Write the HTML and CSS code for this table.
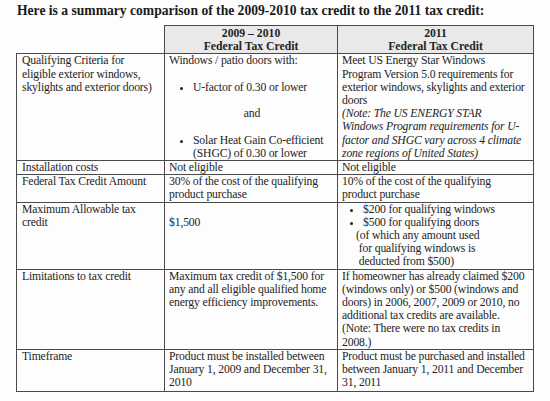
FILE: index.html
```html
<html>
<head>
<meta charset="utf-8">
<title>Tax credit comparison</title>
<link rel="stylesheet" href="styles.css">
</head>
<body>

<div class="page">
<p class="intro">Here is a summary comparison of the 2009-2010 tax credit to the 2011 tax credit:</p>

<table class="compare">
    <tr class="head">
        <th class="blank"></th>
        <th>2009 &ndash; 2010<br>Federal Tax Credit</th>
        <th>2011<br>Federal Tax Credit</th>
    </tr>
    <tr>
        <td>Qualifying Criteria for<br>eligible exterior windows,<br>skylights and exterior doors)</td>
        <td>
            Windows / patio doors with:
            <ul class="dots">
                <li>U-factor of 0.30 or lower</li>
            </ul>
            <div class="and">and</div>
            <ul class="dots">
                <li>Solar Heat Gain Co-efficient<br>(SHGC) of 0.30 or lower</li>
            </ul>
        </td>
        <td>
            Meet US Energy Star Windows<br>Program Version 5.0 requirements for<br>exterior windows, skylights and exterior<br>doors
            <div class="note">(Note: The US ENERGY STAR<br>Windows Program requirements for U-<br>factor and SHGC vary across 4 climate<br>zone regions of United States)</div>
        </td>
    </tr>
    <tr>
        <td>Installation costs</td>
        <td>Not eligible</td>
        <td>Not eligible</td>
    </tr>
    <tr>
        <td>Federal Tax Credit Amount</td>
        <td>30% of the cost of the qualifying<br>product purchase</td>
        <td>10% of the cost of the qualifying<br>product purchase</td>
    </tr>
    <tr>
        <td>Maximum Allowable tax<br>credit</td>
        <td><br>$1,500</td>
        <td>
            <ul class="dots tight">
                <li>$200 for qualifying windows</li>
                <li>$500 for qualifying doors</li>
            </ul>
            <div class="aside">(of which any amount used<br>&nbsp;for qualifying windows is<br>&nbsp;deducted from $500)</div>
        </td>
    </tr>
    <tr>
        <td>Limitations to tax credit</td>
        <td>Maximum tax credit of $1,500 for<br>any and all eligible qualified home<br>energy efficiency improvements.</td>
        <td>If homeowner has already claimed $200<br>(windows only) or $500 (windows and<br>doors) in 2006, 2007, 2009 or 2010, no<br>additional tax credits are available.<br>(Note: There were no tax credits in<br>2008.)</td>
    </tr>
    <tr class="last">
        <td>Timeframe</td>
        <td>Product must be installed between<br>January 1, 2009 and December 31,<br>2010</td>
        <td>Product must be purchased and installed<br>between January 1, 2011 and December<br>31, 2011</td>
    </tr>
</table>
</div>

</body>
</html>
```

FILE: styles.css
```css
body {
    margin: 0px;
    background-color: #fdfdfd;
    color: #242424;
    font-family: "Liberation Serif", "Times New Roman", serif;
}

.page {
    padding: 3px 0px 0px 16px;
}

.intro {
    margin: 0px 0px 7px 1px;
    font-size: 13.6px;
    font-weight: bold;
    line-height: 15px;
    color: #1a1a1a;
}

.compare {
    border-collapse: collapse;
    font-size: 11.7px;
    letter-spacing: -0.15px;
    line-height: 13.2px;
}

.compare td, .compare th {
    border: 1px solid #4a4a4a;
    vertical-align: top;
    text-align: left;
    white-space: nowrap;
    padding: 0px 2px 0px 5px;
}

.compare td:nth-child(1) {
    width: 140px;
}

.compare td:nth-child(2) {
    width: 166px;
    padding-left: 4px;
}

.compare td:nth-child(3) {
    width: 189px;
    padding-left: 4px;
}

.head th {
    background-color: #e9e9e9;
    text-align: center;
    font-weight: bold;
    letter-spacing: 0px;
    padding: 1px 4px 0px 4px;
}

.head th.blank {
    background-color: transparent;
    border: none;
    border-bottom: 1px solid #4a4a4a;
}

.last td {
    padding-bottom: 2px;
}

.dots {
    margin: 13.2px 0px 0px 0px;
    padding: 0px 0px 0px 24px;
}

.dots.tight {
    margin: 0px;
    padding-left: 21px;
}

.and {
    margin-top: 13.2px;
    text-align: center;
}

.aside {
    padding-left: 14px;
}

.note {
    font-style: italic;
}
```
